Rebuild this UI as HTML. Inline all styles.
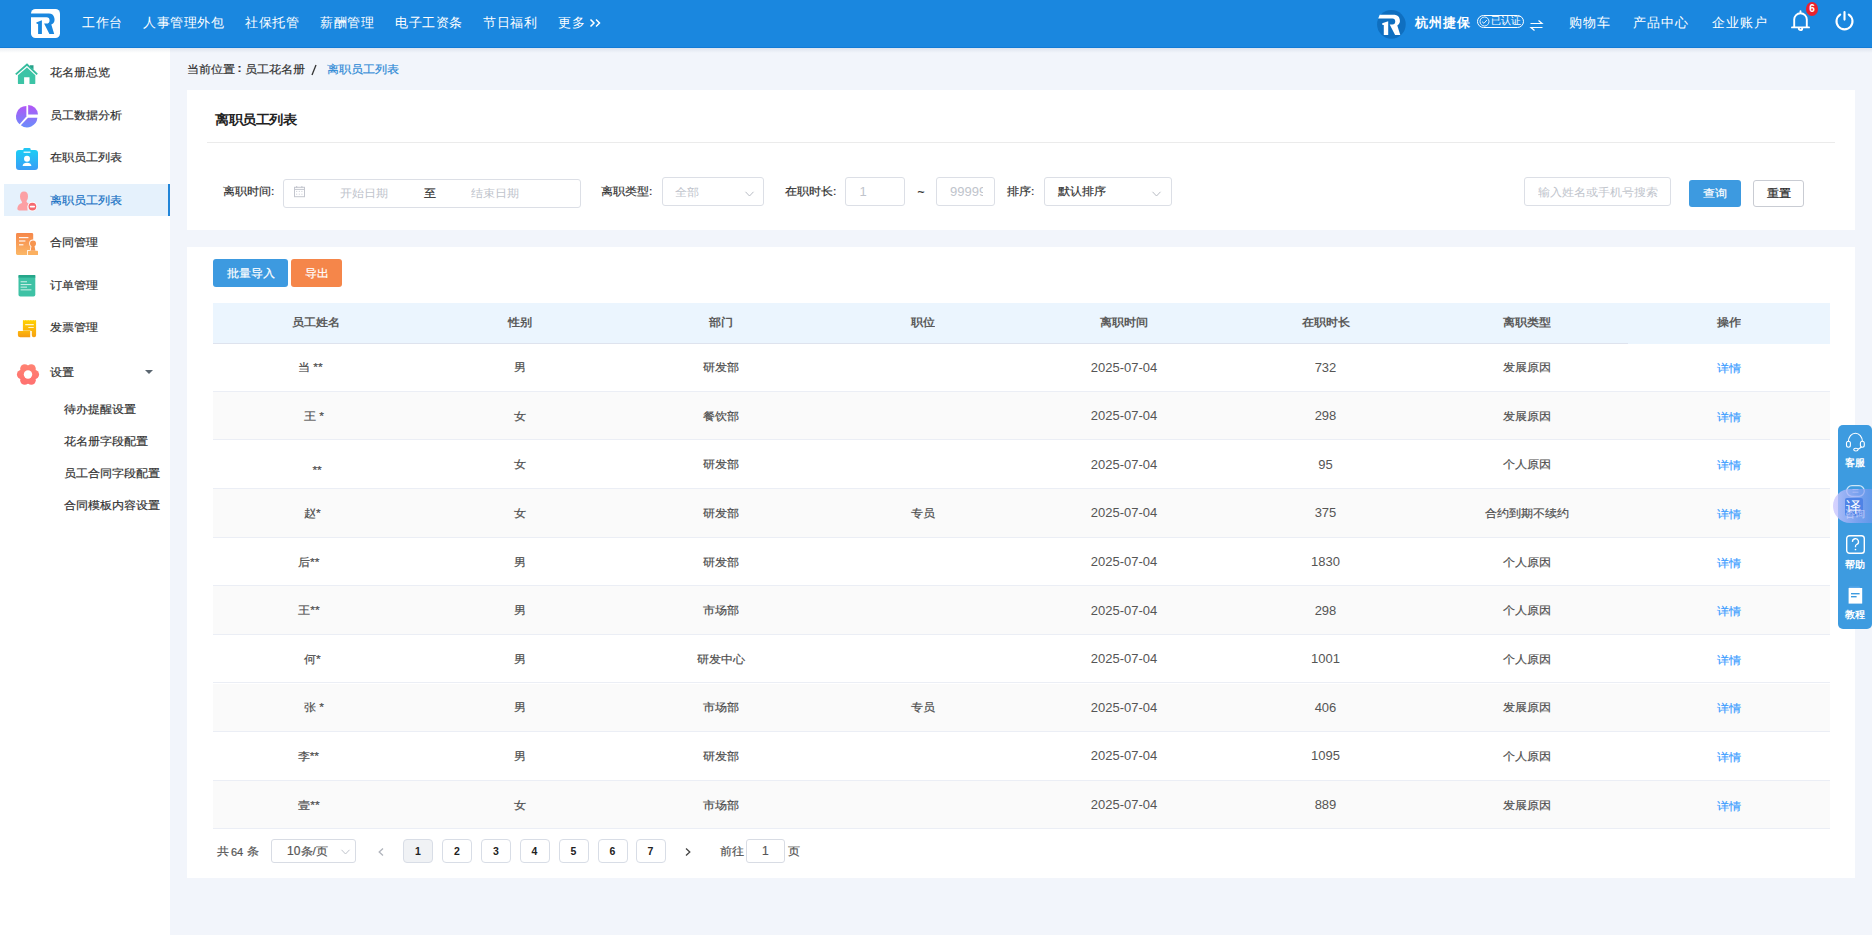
<!DOCTYPE html><html><head><meta charset="utf-8"><style>
*{box-sizing:border-box;margin:0;padding:0}
html,body{width:1872px;height:935px;overflow:hidden}
body{position:relative;background:#f2f5fb;font-family:"Liberation Sans",sans-serif;color:#333;font-size:12px}
.a{position:absolute;white-space:nowrap}
#top{position:absolute;left:0;top:0;width:1872px;height:48px;background:#1a87df}
.n{position:absolute;top:12.5px;font-size:14px;line-height:20px;color:#fff;white-space:nowrap}
#shadow{position:absolute;left:0;top:48px;width:1872px;height:5px;background:linear-gradient(rgba(20,60,110,.09),rgba(20,60,110,0))}
#side{position:absolute;left:0;top:48px;width:170px;height:887px;background:#fff}
.si{position:absolute;left:50px;font-size:12px;transform:scaleY(.91);line-height:16px;color:#333;white-space:nowrap}
svg{position:absolute;overflow:visible}
.card{position:absolute;background:#fff}
.lbl{position:absolute;font-size:12px;transform:scaleY(.91);line-height:16px;color:#333;white-space:nowrap}
.box{position:absolute;border:1px solid #dcdfe6;border-radius:3px;background:#fff}
.ph{position:absolute;font-size:12px;transform:scaleY(.91);line-height:16px;color:#c0c4cc;white-space:nowrap}
.btn{position:absolute;border-radius:3px;color:#fff;font-size:12px;text-align:center;white-space:nowrap}
.th{position:absolute;top:303px;height:40.6px;background:#ebf5fe}
.cell{position:absolute;text-align:center;font-size:12px;transform:scaleY(.91);line-height:16px;color:#4e4e4e;white-space:nowrap}
.hd{font-weight:bold;color:#5a5a5a}
.rowbg{position:absolute;left:213px;width:1617px}
.pg{position:absolute;top:839px;width:30px;height:24px;border:1px solid #d8dde6;border-radius:4px;background:#fff;font-size:10.5px;font-weight:bold;line-height:22px;text-align:center;color:#222}
.btn span{display:inline-block;transform:scaleY(.91)}
.si,.lbl,.cell,.btn span{-webkit-text-stroke-width:0.2px}
.hd{-webkit-text-stroke-width:0}
.tb{position:absolute;left:1838px;width:34px;color:#fff;font-size:10px;font-weight:bold;text-align:center;line-height:12px}
</style></head><body>
<div id="top">
<svg style="left:31px;top:9px" width="29" height="29" viewBox="0 0 29 29">
<rect x="0" y="0" width="29" height="29" rx="4.5" fill="#fff"/>
<path d="M0,4.5 H17.6 A5.8 5.8 0 0 1 20.3,15.5 L23.2,24.9 H18.4 L13.1,14.5 H15.5 A3.07 3.07 0 0 0 15.5,8.36 H0 Z" fill="#1a87df"/>
<polygon points="5.2,13.5 10.9,11.2 10.9,24.9 7.1,24.9 7.1,14.9 5.7,14.8" fill="#1a87df"/>
</svg>
<span class="n" style="left:82px;font-size:13px;letter-spacing:0.5px">工作台</span>
<span class="n" style="left:143px;font-size:13px;letter-spacing:0.5px">人事管理外包</span>
<span class="n" style="left:245px;font-size:13px;letter-spacing:0.5px">社保托管</span>
<span class="n" style="left:320px;font-size:13px;letter-spacing:0.5px">薪酬管理</span>
<span class="n" style="left:395px;font-size:13px;letter-spacing:0.5px">电子工资条</span>
<span class="n" style="left:483px;font-size:13px;letter-spacing:0.5px">节日福利</span>
<span class="n" style="left:558px;font-size:13px;letter-spacing:0.5px">更多</span>
<svg style="left:589px;top:18px" width="13" height="10" viewBox="0 0 13 10">
<path d="M1.5,1.5 L5,5 L1.5,8.5 M7,1.5 L10.5,5 L7,8.5" fill="none" stroke="#fff" stroke-width="1.5"/></svg>
<svg style="left:1377px;top:10px" width="29" height="29" viewBox="0 0 29 29">
<circle cx="14.4" cy="14.4" r="14.3" fill="#0f6fc0"/>
<path d="M2.7,4.86 H17.6 A5.75 5.75 0 0 1 20.3,15.4 L23.3,24.9 H18.1 L12.7,14.5 H15.4 A3.0 3.0 0 0 0 15.4,8.51 H1.2 Z" fill="#fff"/>
<polygon points="5.2,13.3 11.2,11.2 11.2,24.9 6.8,24.9 6.8,14.9 5.4,14.9" fill="#fff"/>
</svg>
<span class="n" style="left:1415px;font-weight:bold;font-size:13px;letter-spacing:1px">杭州捷保</span>
<div class="a" style="left:1477px;top:15px;width:47px;height:13px;border:1px solid #fff;border-radius:7px"></div>
<svg style="left:1478.5px;top:16px" width="11" height="11" viewBox="0 0 11 11"><circle cx="5.5" cy="5.5" r="4.5" fill="none" stroke="#fff" stroke-width="0.9"/><path d="M3,5.6 L4.9,7.3 L8,3.9" fill="none" stroke="#fff" stroke-width="0.9"/></svg>
<span class="a" style="left:1490.5px;top:15px;font-size:10px;line-height:12px;color:#fff">已认证</span>
<svg style="left:1530px;top:20px" width="13" height="11" viewBox="0 0 13 11">
<path d="M0.5,3.5 H12 L8.5,0.5 M12.5,7.5 H1 L4.5,10.5" fill="none" stroke="#fff" stroke-width="1.2"/></svg>
<span class="n" style="left:1569px;font-size:13px;letter-spacing:1px">购物车</span>
<span class="n" style="left:1633px;font-size:13px;letter-spacing:1px">产品中心</span>
<span class="n" style="left:1712px;font-size:13px;letter-spacing:1px">企业账户</span>
<svg style="left:1791px;top:10px" width="19" height="22" viewBox="0 0 19 22">
<path d="M9.5,1.2 V2.6 M3.2,16.6 V9.6 A6.3 6.3 0 0 1 15.8,9.6 V16.6 M1,17.4 H18 M7.8,18.4 A1.7 1.7 0 0 0 11.2,18.4" fill="none" stroke="#fff" stroke-width="1.9" stroke-linecap="round"/></svg>
<div class="a" style="left:1805.8px;top:2px;width:12.4px;height:14px;border-radius:50%;background:#e8222e;color:#fff;font-size:10px;font-weight:bold;line-height:14px;text-align:center">6</div>
<svg style="left:1835px;top:11px" width="19" height="19" viewBox="0 0 19 19">
<path d="M5.2,3.6 A8 8 0 1 0 13.8,3.6 M9.5,1 V8.6" fill="none" stroke="#fff" stroke-width="2.1" stroke-linecap="round"/></svg>
<div class="a" style="left:0;top:47px;width:1872px;height:1px;background:#127bd6"></div>
</div>
<div id="side"></div>
<div class="a" style="left:4px;top:184px;width:166px;height:32px;background:#e5f1fc;border-right:2px solid #2185d8"></div>
<span class="si" style="top:64.0px;color:#333">花名册总览</span>
<span class="si" style="top:107.0px;color:#333">员工数据分析</span>
<span class="si" style="top:149.0px;color:#333">在职员工列表</span>
<span class="si" style="top:192.0px;color:#1a72c4">离职员工列表</span>
<span class="si" style="top:234.0px;color:#333">合同管理</span>
<span class="si" style="top:277.0px;color:#333">订单管理</span>
<span class="si" style="top:319.0px;color:#333">发票管理</span>
<span class="si" style="top:364.0px;color:#333">设置</span>
<span class="si" style="left:64px;top:401.0px">待办提醒设置</span>
<span class="si" style="left:64px;top:433.0px">花名册字段配置</span>
<span class="si" style="left:64px;top:465.0px">员工合同字段配置</span>
<span class="si" style="left:64px;top:497.0px">合同模板内容设置</span>
<svg style="left:145px;top:370px" width="8" height="4" viewBox="0 0 8 4"><polygon points="0,0 8,0 4,4" fill="#5b6670"/></svg>
<svg style="left:16px;top:64px" width="22" height="21" viewBox="0 0 22 21">
<polygon points="13.9,1.3 17.5,1.3 17.5,5.6 13.9,3.2" fill="#27a088"/>
<path d="M-0.2,10.4 L11,0.6 L21.2,10.4" fill="none" stroke="#35bc9e" stroke-width="1.9" stroke-linejoin="miter"/>
<path d="M1.9,11.2 L11,3.4 L19.3,11.2 V19.2 Q19.3,20.1 18.4,20.1 H13.5 V13.2 H8.1 V20.1 H2.8 Q1.9,20.1 1.9,19.2 Z" fill="#3cc4a6"/>
</svg>
<svg style="left:16px;top:105px" width="22" height="22" viewBox="0 0 22 22">
<defs><linearGradient id="gp" gradientUnits="userSpaceOnUse" x1="0" y1="0" x2="0" y2="22"><stop offset="0" stop-color="#b455f6"/><stop offset="1" stop-color="#6b8cfb"/></linearGradient></defs>
<path d="M12.2,0 A10 10 0 0 1 22,9.6 H12.2 Z" fill="url(#gp)"/>
<path d="M10.4,1 V11.4 L3.6,19.2 A10.4 10.4 0 0 1 10.4,1 Z" fill="url(#gp)"/>
<path d="M12,12.8 H21.4 A10.4 10.4 0 0 1 4.8,20.2 Z" fill="url(#gp)"/>
</svg>
<svg style="left:16px;top:148px" width="22" height="22" viewBox="0 0 22 22">
<defs><linearGradient id="gb" x1="0" y1="0" x2="0" y2="1"><stop offset="0" stop-color="#1ccdf5"/><stop offset="1" stop-color="#3a9cf6"/></linearGradient></defs>
<rect x="0" y="2" width="22" height="20" rx="3" fill="url(#gb)"/>
<rect x="7.4" y="0" width="7.2" height="4.4" rx="1.2" fill="#22c6f4"/>
<rect x="7.6" y="3.6" width="6.8" height="1.2" fill="#fff"/>
<circle cx="11" cy="10.8" r="3" fill="#fff"/>
<path d="M6.6,18 Q7,14.8 11,14.8 Q15,14.8 15.4,18 Z" fill="#fff"/>
</svg>
<svg style="left:17px;top:190px" width="22" height="22" viewBox="0 0 22 22">
<path d="M7,1.6 Q11,1.6 11,6.4 Q11,9.6 9.4,11.2 Q9.8,13 12,13.6 Q9.6,16 10.6,20.4 H2.4 Q0,20.4 0.4,18 Q1,14 5,13 Q5,12 4.6,11.2 Q3,9.6 3,6.4 Q3,1.6 7,1.6 Z" fill="#fca0a4"/>
<circle cx="15.4" cy="16.6" r="4.8" fill="#fff"/>
<circle cx="15.4" cy="16.6" r="3.9" fill="#f56a70"/>
<rect x="12.8" y="15.8" width="5.2" height="1.7" rx="0.8" fill="#fff"/>
</svg>
<svg style="left:16px;top:233px" width="22" height="22" viewBox="0 0 22 22">
<defs><linearGradient id="go" gradientUnits="userSpaceOnUse" x1="0" y1="0" x2="0" y2="22"><stop offset="0" stop-color="#f6874a"/><stop offset="1" stop-color="#fbb766"/></linearGradient></defs>
<rect x="0" y="0" width="17.2" height="22" rx="1.4" fill="url(#go)"/>
<rect x="3" y="4" width="9.4" height="1.2" fill="#fff" opacity=".9"/>
<rect x="3" y="7.4" width="6.4" height="1.2" fill="#fff" opacity=".9"/>
<rect x="3" y="11.2" width="4.4" height="1.2" fill="#fff" opacity=".9"/>
<g stroke="#fff" stroke-width="1.6" fill="#fff">
<circle cx="17" cy="10.4" r="3"/><path d="M15.6,12.4 H18.4 L19.4,17.8 H14.6 Z"/><rect x="12" y="17.8" width="10" height="4.2"/></g>
<g fill="#f7954f"><circle cx="17" cy="10.4" r="3"/><path d="M15.6,12.4 H18.4 L19.4,17.8 H14.6 Z"/></g>
<rect x="12" y="17.8" width="10" height="4.2" rx="0.6" fill="#fbb060"/>
</svg>
<svg style="left:18px;top:275px" width="18" height="22" viewBox="0 0 18 22">
<rect x="0.5" y="0" width="16.8" height="21.6" rx="1.8" fill="#3ec2a5"/>
<rect x="0.5" y="0" width="16.8" height="2.6" fill="#26a68a"/>
<rect x="2.6" y="6.2" width="6.4" height="1.1" fill="#fff" opacity=".7"/>
<rect x="2.6" y="9" width="10.8" height="1.1" fill="#fff" opacity=".7"/>
<rect x="2.6" y="11.6" width="6.4" height="1.1" fill="#fff" opacity=".7"/>
<rect x="2.6" y="14.3" width="10.8" height="1.1" fill="#fff" opacity=".7"/>
</svg>
<svg style="left:17px;top:320px" width="20" height="18" viewBox="0 0 20 18">
<defs><linearGradient id="gy" gradientUnits="userSpaceOnUse" x1="0" y1="0" x2="0" y2="17.5"><stop offset="0" stop-color="#ffd200"/><stop offset="1" stop-color="#f6a012"/></linearGradient>
<linearGradient id="gy2" gradientUnits="userSpaceOnUse" x1="0" y1="11" x2="0" y2="17.5"><stop offset="0" stop-color="#fdb80c"/><stop offset="1" stop-color="#f49a14"/></linearGradient></defs>
<path d="M5.9,0.6 L6.73,0 L7.55,0.6 L8.38,0 L9.20,0.6 L10.03,0 L10.85,0.6 L11.68,0 L12.50,0.6 L13.32,0 L14.15,0.6 L14.97,0 L15.80,0.6 L16.62,0 L17.45,0.6 L18.28,0 L19.10,0.6 V15.2 Q19.1,17.2 17.1,17.2 H16.8 Q14.8,17.2 14.8,15.2 V11 H5.9 Z" fill="url(#gy)"/>
<rect x="8.1" y="4.1" width="8.8" height="1.1" rx="0.5" fill="#fff" opacity=".8"/>
<rect x="11.2" y="7" width="5.7" height="1.1" rx="0.5" fill="#fff" opacity=".8"/>
<path d="M1.9,10.6 H13.6 V17.4 H3.4 Q0.7,17.4 0.7,14.8 V11.8 Q0.7,10.6 1.9,10.6 Z" fill="#fff" opacity=".7"/>
<path d="M1.9,11.1 H13.2 V17.3 H3.4 Q0.9,17.3 0.9,14.8 V12.1 Q0.9,11.1 1.9,11.1 Z" fill="url(#gy2)"/>
</svg>
<svg style="left:17px;top:363.5px" width="22" height="22" viewBox="0 0 22 22">
<defs><linearGradient id="gg" gradientUnits="userSpaceOnUse" x1="0" y1="0" x2="0" y2="21"><stop offset="0" stop-color="#ff8272"/><stop offset="1" stop-color="#ff7070"/></linearGradient></defs>
<g fill="url(#gg)"><circle cx="11" cy="10.5" r="8.9"/><circle cx="17.60" cy="10.50" r="4.5"/><circle cx="14.30" cy="4.78" r="4.5"/><circle cx="7.70" cy="4.78" r="4.5"/><circle cx="4.40" cy="10.50" r="4.5"/><circle cx="7.70" cy="16.22" r="4.5"/><circle cx="14.30" cy="16.22" r="4.5"/></g>
<circle cx="11" cy="10.5" r="4.2" fill="#fff"/>
</svg>
<div id="shadow"></div>
<span class="lbl" style="left:187px;top:60.5px">当前位置</span>
<span class="lbl" style="left:237.5px;top:60px;font-weight:bold">:</span>
<span class="lbl" style="left:244.5px;top:60.5px">员工花名册</span>
<svg style="left:311px;top:64px" width="6" height="12" viewBox="0 0 6 12"><path d="M1,11 L5,1" stroke="#333" stroke-width="1.3"/></svg>
<span class="lbl" style="left:327px;top:60.5px;color:#2f8ad6">离职员工列表</span>
<div class="card" style="left:187px;top:90px;width:1668px;height:140px"></div>
<span class="lbl" style="left:215px;top:110px;font-size:14px;line-height:18px;font-weight:bold;color:#222;letter-spacing:-0.5px;-webkit-text-stroke-width:0">离职员工列表</span>
<div class="a" style="left:207px;top:142px;width:1628px;height:1px;background:#ebebeb"></div>
<span class="lbl" style="left:223px;top:182.5px">离职时间:</span>
<div class="box" style="left:283px;top:179px;width:298px;height:29px"></div>
<svg style="left:294px;top:186px" width="11" height="11" viewBox="0 0 11 11"><rect x="0.5" y="1.3" width="10" height="9.4" fill="none" stroke="#c3c6ce" stroke-width="1"/><path d="M0.5,3.4H10.5M2.7,0V2M7.9,0V2" stroke="#c3c6ce" stroke-width="1"/><path d="M2.2,5.4H3.2M4.8,5.4H5.8M7.4,5.4H8.4M2.2,8.2H3.2M4.8,8.2H5.8M7.4,8.2H8.4" stroke="#c8cbd3" stroke-width="1"/></svg>
<span class="ph" style="left:340px;top:185px">开始日期</span>
<span class="lbl" style="left:424px;top:185px">至</span>
<span class="ph" style="left:471px;top:185px">结束日期</span>
<span class="lbl" style="left:601px;top:182.5px">离职类型:</span>
<div class="box" style="left:662px;top:177px;width:102px;height:29px"></div>
<span class="ph" style="left:675px;top:183.5px">全部</span>
<svg style="left:745px;top:191px" width="9" height="6" viewBox="0 0 9 6"><path d="M0.5,0.8 L4.5,5 L8.5,0.8" fill="none" stroke="#b8bcc4" stroke-width="1"/></svg>
<span class="lbl" style="left:785px;top:182.5px">在职时长:</span>
<div class="box" style="left:845px;top:177px;width:60px;height:29px"></div>
<span class="ph" style="left:859.5px;top:183.5px;font-size:13px;transform:none">1</span>
<span class="lbl" style="left:917.5px;top:183.5px;transform:none">~</span>
<div class="box" style="left:936px;top:177px;width:59px;height:29px;overflow:hidden"></div>
<div class="a" style="left:950px;top:183.5px;width:33px;overflow:hidden"><span class="ph" style="position:static;font-size:13px;transform:none">99999</span></div>
<span class="lbl" style="left:1007px;top:182.5px">排序:</span>
<div class="box" style="left:1044px;top:177px;width:128px;height:29px"></div>
<span class="lbl" style="left:1058px;top:182.5px">默认排序</span>
<svg style="left:1152px;top:191px" width="9" height="6" viewBox="0 0 9 6"><path d="M0.5,0.8 L4.5,5 L8.5,0.8" fill="none" stroke="#b8bcc4" stroke-width="1"/></svg>
<div class="box" style="left:1524px;top:177px;width:147px;height:29px"></div>
<span class="ph" style="left:1538px;top:183.5px">输入姓名或手机号搜索</span>
<div class="btn" style="left:1689px;top:180px;width:52px;height:27px;line-height:27px;background:#3d9ae0"><span>查询</span></div>
<div class="btn" style="left:1753px;top:180px;width:51px;height:27px;line-height:25px;background:#fff;border:1px solid #c9ccd3;color:#222"><span>重置</span></div>
<div class="card" style="left:187px;top:247px;width:1668px;height:631px"></div>
<div class="btn" style="left:213px;top:259px;width:75px;height:28px;line-height:28px;background:#3d9ae0"><span>批量导入</span></div>
<div class="btn" style="left:291px;top:259px;width:51px;height:28px;line-height:28px;background:#f5864a"><span>导出</span></div>
<div class="th" style="left:213px;width:1617px"></div>
<div class="a" style="left:213px;top:343px;width:1415px;height:1px;background:#dee3ee;z-index:1"></div>
<div class="a" style="left:1628px;top:343px;width:202px;height:1px;background:#ebf5fe;z-index:1"></div>
<span class="cell hd" style="left:213.00px;width:205.75px;top:313.5px">员工姓名</span>
<span class="cell hd" style="left:418.75px;width:201.50px;top:313.5px">性别</span>
<span class="cell hd" style="left:620.25px;width:201.50px;top:313.5px">部门</span>
<span class="cell hd" style="left:821.75px;width:201.50px;top:313.5px">职位</span>
<span class="cell hd" style="left:1023.25px;width:201.50px;top:313.5px">离职时间</span>
<span class="cell hd" style="left:1224.75px;width:201.50px;top:313.5px">在职时长</span>
<span class="cell hd" style="left:1426.25px;width:201.50px;top:313.5px">离职类型</span>
<span class="cell hd" style="left:1627.75px;width:201.50px;top:313.5px">操作</span>
<div class="rowbg" style="top:343.30px;height:48.60px;background:#fff;border-bottom:1px solid #ebeef5"></div>
<span class="cell" style="left:298.00px;text-align:left;top:359.20px;white-space:pre">当 **</span>
<span class="cell" style="left:418.75px;width:201.50px;top:359.20px">男</span>
<span class="cell" style="left:620.25px;width:201.50px;top:359.20px">研发部</span>
<span class="cell" style="left:1023.25px;width:201.50px;top:359.50px;font-size:13px;transform:none;-webkit-text-stroke-width:0;color:#555">2025-07-04</span>
<span class="cell" style="left:1224.75px;width:201.50px;top:359.50px;font-size:13px;transform:none;-webkit-text-stroke-width:0;color:#555">732</span>
<span class="cell" style="left:1426.25px;width:201.50px;top:359.20px">发展原因</span>
<span class="cell" style="left:1627.75px;width:201.50px;top:360.20px;color:#409eff">详情</span>
<div class="rowbg" style="top:391.90px;height:48.60px;background:#fafafa;border-bottom:1px solid #ebeef5"></div>
<span class="cell" style="left:304.00px;text-align:left;top:407.80px;white-space:pre">王 *</span>
<span class="cell" style="left:418.75px;width:201.50px;top:407.80px">女</span>
<span class="cell" style="left:620.25px;width:201.50px;top:407.80px">餐饮部</span>
<span class="cell" style="left:1023.25px;width:201.50px;top:408.10px;font-size:13px;transform:none;-webkit-text-stroke-width:0;color:#555">2025-07-04</span>
<span class="cell" style="left:1224.75px;width:201.50px;top:408.10px;font-size:13px;transform:none;-webkit-text-stroke-width:0;color:#555">298</span>
<span class="cell" style="left:1426.25px;width:201.50px;top:407.80px">发展原因</span>
<span class="cell" style="left:1627.75px;width:201.50px;top:408.80px;color:#409eff">详情</span>
<div class="rowbg" style="top:440.50px;height:48.60px;background:#fff;border-bottom:1px solid #ebeef5"></div>
<span class="cell" style="left:312.40px;text-align:left;top:462.40px;white-space:pre">**</span>
<span class="cell" style="left:418.75px;width:201.50px;top:456.40px">女</span>
<span class="cell" style="left:620.25px;width:201.50px;top:456.40px">研发部</span>
<span class="cell" style="left:1023.25px;width:201.50px;top:456.70px;font-size:13px;transform:none;-webkit-text-stroke-width:0;color:#555">2025-07-04</span>
<span class="cell" style="left:1224.75px;width:201.50px;top:456.70px;font-size:13px;transform:none;-webkit-text-stroke-width:0;color:#555">95</span>
<span class="cell" style="left:1426.25px;width:201.50px;top:456.40px">个人原因</span>
<span class="cell" style="left:1627.75px;width:201.50px;top:457.40px;color:#409eff">详情</span>
<div class="rowbg" style="top:489.10px;height:48.60px;background:#fafafa;border-bottom:1px solid #ebeef5"></div>
<span class="cell" style="left:304.00px;text-align:left;top:505.00px;white-space:pre">赵*</span>
<span class="cell" style="left:418.75px;width:201.50px;top:505.00px">女</span>
<span class="cell" style="left:620.25px;width:201.50px;top:505.00px">研发部</span>
<span class="cell" style="left:821.75px;width:201.50px;top:505.00px">专员</span>
<span class="cell" style="left:1023.25px;width:201.50px;top:505.30px;font-size:13px;transform:none;-webkit-text-stroke-width:0;color:#555">2025-07-04</span>
<span class="cell" style="left:1224.75px;width:201.50px;top:505.30px;font-size:13px;transform:none;-webkit-text-stroke-width:0;color:#555">375</span>
<span class="cell" style="left:1426.25px;width:201.50px;top:505.00px">合约到期不续约</span>
<span class="cell" style="left:1627.75px;width:201.50px;top:506.00px;color:#409eff">详情</span>
<div class="rowbg" style="top:537.70px;height:48.60px;background:#fff;border-bottom:1px solid #ebeef5"></div>
<span class="cell" style="left:298.00px;text-align:left;top:553.60px;white-space:pre">后**</span>
<span class="cell" style="left:418.75px;width:201.50px;top:553.60px">男</span>
<span class="cell" style="left:620.25px;width:201.50px;top:553.60px">研发部</span>
<span class="cell" style="left:1023.25px;width:201.50px;top:553.90px;font-size:13px;transform:none;-webkit-text-stroke-width:0;color:#555">2025-07-04</span>
<span class="cell" style="left:1224.75px;width:201.50px;top:553.90px;font-size:13px;transform:none;-webkit-text-stroke-width:0;color:#555">1830</span>
<span class="cell" style="left:1426.25px;width:201.50px;top:553.60px">个人原因</span>
<span class="cell" style="left:1627.75px;width:201.50px;top:554.60px;color:#409eff">详情</span>
<div class="rowbg" style="top:586.30px;height:48.60px;background:#fafafa;border-bottom:1px solid #ebeef5"></div>
<span class="cell" style="left:298.30px;text-align:left;top:602.20px;white-space:pre">王**</span>
<span class="cell" style="left:418.75px;width:201.50px;top:602.20px">男</span>
<span class="cell" style="left:620.25px;width:201.50px;top:602.20px">市场部</span>
<span class="cell" style="left:1023.25px;width:201.50px;top:602.50px;font-size:13px;transform:none;-webkit-text-stroke-width:0;color:#555">2025-07-04</span>
<span class="cell" style="left:1224.75px;width:201.50px;top:602.50px;font-size:13px;transform:none;-webkit-text-stroke-width:0;color:#555">298</span>
<span class="cell" style="left:1426.25px;width:201.50px;top:602.20px">个人原因</span>
<span class="cell" style="left:1627.75px;width:201.50px;top:603.20px;color:#409eff">详情</span>
<div class="rowbg" style="top:634.90px;height:48.60px;background:#fff;border-bottom:1px solid #ebeef5"></div>
<span class="cell" style="left:304.00px;text-align:left;top:650.80px;white-space:pre">何*</span>
<span class="cell" style="left:418.75px;width:201.50px;top:650.80px">男</span>
<span class="cell" style="left:620.25px;width:201.50px;top:650.80px">研发中心</span>
<span class="cell" style="left:1023.25px;width:201.50px;top:651.10px;font-size:13px;transform:none;-webkit-text-stroke-width:0;color:#555">2025-07-04</span>
<span class="cell" style="left:1224.75px;width:201.50px;top:651.10px;font-size:13px;transform:none;-webkit-text-stroke-width:0;color:#555">1001</span>
<span class="cell" style="left:1426.25px;width:201.50px;top:650.80px">个人原因</span>
<span class="cell" style="left:1627.75px;width:201.50px;top:651.80px;color:#409eff">详情</span>
<div class="rowbg" style="top:683.50px;height:48.60px;background:#fafafa;border-bottom:1px solid #ebeef5"></div>
<span class="cell" style="left:304.00px;text-align:left;top:699.40px;white-space:pre">张 *</span>
<span class="cell" style="left:418.75px;width:201.50px;top:699.40px">男</span>
<span class="cell" style="left:620.25px;width:201.50px;top:699.40px">市场部</span>
<span class="cell" style="left:821.75px;width:201.50px;top:699.40px">专员</span>
<span class="cell" style="left:1023.25px;width:201.50px;top:699.70px;font-size:13px;transform:none;-webkit-text-stroke-width:0;color:#555">2025-07-04</span>
<span class="cell" style="left:1224.75px;width:201.50px;top:699.70px;font-size:13px;transform:none;-webkit-text-stroke-width:0;color:#555">406</span>
<span class="cell" style="left:1426.25px;width:201.50px;top:699.40px">发展原因</span>
<span class="cell" style="left:1627.75px;width:201.50px;top:700.40px;color:#409eff">详情</span>
<div class="rowbg" style="top:732.10px;height:48.60px;background:#fff;border-bottom:1px solid #ebeef5"></div>
<span class="cell" style="left:297.70px;text-align:left;top:748.00px;white-space:pre">李**</span>
<span class="cell" style="left:418.75px;width:201.50px;top:748.00px">男</span>
<span class="cell" style="left:620.25px;width:201.50px;top:748.00px">研发部</span>
<span class="cell" style="left:1023.25px;width:201.50px;top:748.30px;font-size:13px;transform:none;-webkit-text-stroke-width:0;color:#555">2025-07-04</span>
<span class="cell" style="left:1224.75px;width:201.50px;top:748.30px;font-size:13px;transform:none;-webkit-text-stroke-width:0;color:#555">1095</span>
<span class="cell" style="left:1426.25px;width:201.50px;top:748.00px">个人原因</span>
<span class="cell" style="left:1627.75px;width:201.50px;top:749.00px;color:#409eff">详情</span>
<div class="rowbg" style="top:780.70px;height:48.60px;background:#fafafa;border-bottom:1px solid #ebeef5"></div>
<span class="cell" style="left:298.30px;text-align:left;top:796.60px;white-space:pre">壹**</span>
<span class="cell" style="left:418.75px;width:201.50px;top:796.60px">女</span>
<span class="cell" style="left:620.25px;width:201.50px;top:796.60px">市场部</span>
<span class="cell" style="left:1023.25px;width:201.50px;top:796.90px;font-size:13px;transform:none;-webkit-text-stroke-width:0;color:#555">2025-07-04</span>
<span class="cell" style="left:1224.75px;width:201.50px;top:796.90px;font-size:13px;transform:none;-webkit-text-stroke-width:0;color:#555">889</span>
<span class="cell" style="left:1426.25px;width:201.50px;top:796.60px">发展原因</span>
<span class="cell" style="left:1627.75px;width:201.50px;top:797.60px;color:#409eff">详情</span>
<span class="lbl" style="left:216.5px;top:843px;color:#555">共</span>
<span class="lbl" style="left:231px;top:843.5px;color:#555;font-size:11px;transform:none">64</span>
<span class="lbl" style="left:246.5px;top:843px;color:#555">条</span>
<div class="box" style="left:271px;top:839px;width:85px;height:24px;border-color:#d8dce4"></div>
<span class="lbl" style="left:287px;top:843px;color:#555;font-size:12px;transform:none">10</span>
<span class="lbl" style="left:300.5px;top:843px;color:#555">条/页</span>
<svg style="left:341px;top:849px" width="9" height="6" viewBox="0 0 9 6"><path d="M0.5,0.8 L4.5,5 L8.5,0.8" fill="none" stroke="#c0c4cc" stroke-width="1"/></svg>
<svg style="left:378px;top:848px" width="6" height="8" viewBox="0 0 6 8"><path d="M5,0.5 L1.2,4 L5,7.5" fill="none" stroke="#b0b4bc" stroke-width="1.3"/></svg>
<div class="pg" style="left:403px;background:#f0f2f5;">1</div>
<div class="pg" style="left:442px;">2</div>
<div class="pg" style="left:481px;">3</div>
<div class="pg" style="left:519.5px;">4</div>
<div class="pg" style="left:558.5px;">5</div>
<div class="pg" style="left:597.5px;">6</div>
<div class="pg" style="left:635.5px;">7</div>
<svg style="left:685px;top:848px" width="6" height="8" viewBox="0 0 6 8"><path d="M1,0.5 L4.8,4 L1,7.5" fill="none" stroke="#444" stroke-width="1.3"/></svg>
<span class="lbl" style="left:720px;top:843px;color:#555">前往</span>
<div class="box" style="left:746px;top:839px;width:39px;height:24px;border-color:#d8dce4"></div>
<span class="lbl" style="left:762px;top:843px;color:#555;font-size:12px;transform:none">1</span>
<span class="lbl" style="left:788px;top:843px;color:#555">页</span>
<div class="a" style="left:1838px;top:425px;width:34px;height:204px;background:#3d9be0;border-radius:5px"></div>
<svg style="left:1845px;top:432px" width="20" height="20" viewBox="0 0 20 20">
<path d="M3.4,9.6 A7 8.4 0 0 1 17.4,9.6" fill="none" stroke="#fff" stroke-width="1.1"/>
<rect x="1.5" y="9.3" width="3.9" height="5.9" rx="1.95" fill="none" stroke="#fff" stroke-width="1.1"/>
<rect x="15.4" y="9.3" width="3.9" height="5.9" rx="1.95" fill="none" stroke="#fff" stroke-width="1.1"/>
<ellipse cx="10.9" cy="17.6" rx="2.2" ry="1.4" fill="none" stroke="#fff" stroke-width="1.1"/>
<path d="M13.1,17.3 L16.6,15" fill="none" stroke="#fff" stroke-width="1.1"/>
</svg>
<div class="tb" style="top:456.5px">客服</div>
<svg style="left:1846px;top:485px" width="19" height="12" viewBox="0 0 19 12"><rect x="0.7" y="0.7" width="17.6" height="10.6" rx="5.3" fill="none" stroke="#fff" stroke-width="1.2" opacity=".75"/><path d="M6.5,4.6H12.5M6.5,7.2H12.5" stroke="#fff" stroke-width="1" opacity=".75"/></svg>
<div class="a" style="left:1833px;top:489px;width:39px;height:34px;border-radius:17px 0 0 17px;background:linear-gradient(90deg,rgba(205,200,255,.8),rgba(150,165,245,.7) 60%,rgba(120,150,240,.6))"></div>
<div class="a" style="left:1845px;top:497.5px;width:17.5px;height:18.5px;background:#4d82e6;border-radius:2px;opacity:.95"></div>
<span class="a" style="left:1846px;top:498px;font-size:15px;line-height:17px;color:#fff">译</span>
<div class="tb" style="top:508px;color:#dcdcff;opacity:.55">咨询</div>
<svg style="left:1846px;top:535px" width="19" height="19" viewBox="0 0 19 19"><rect x="0.7" y="0.7" width="17.6" height="17.6" rx="2.8" fill="none" stroke="#fff" stroke-width="1.4"/>
<path d="M6.5,6.9 A3 3 0 1 1 10.6,9.5 Q9.5,10 9.5,11.2 V12.2" fill="none" stroke="#fff" stroke-width="1.3"/><circle cx="9.5" cy="14.5" r="0.85" fill="#fff"/></svg>
<div class="tb" style="top:558.5px">帮助</div>
<svg style="left:1848px;top:586px" width="15" height="18" viewBox="0 0 15 18"><rect x="0.6" y="2" width="13.6" height="15.6" fill="#fff"/><path d="M1,2 V1.4 Q1,0.4 2,0.4 H11 Q12,0.4 12.4,2" fill="#5aa8ea"/><rect x="3" y="7" width="8.6" height="1.4" fill="#3d9be0"/><rect x="3" y="10" width="5.6" height="1.4" fill="#3d9be0"/></svg>
<div class="tb" style="top:609px">教程</div>
</body></html>
